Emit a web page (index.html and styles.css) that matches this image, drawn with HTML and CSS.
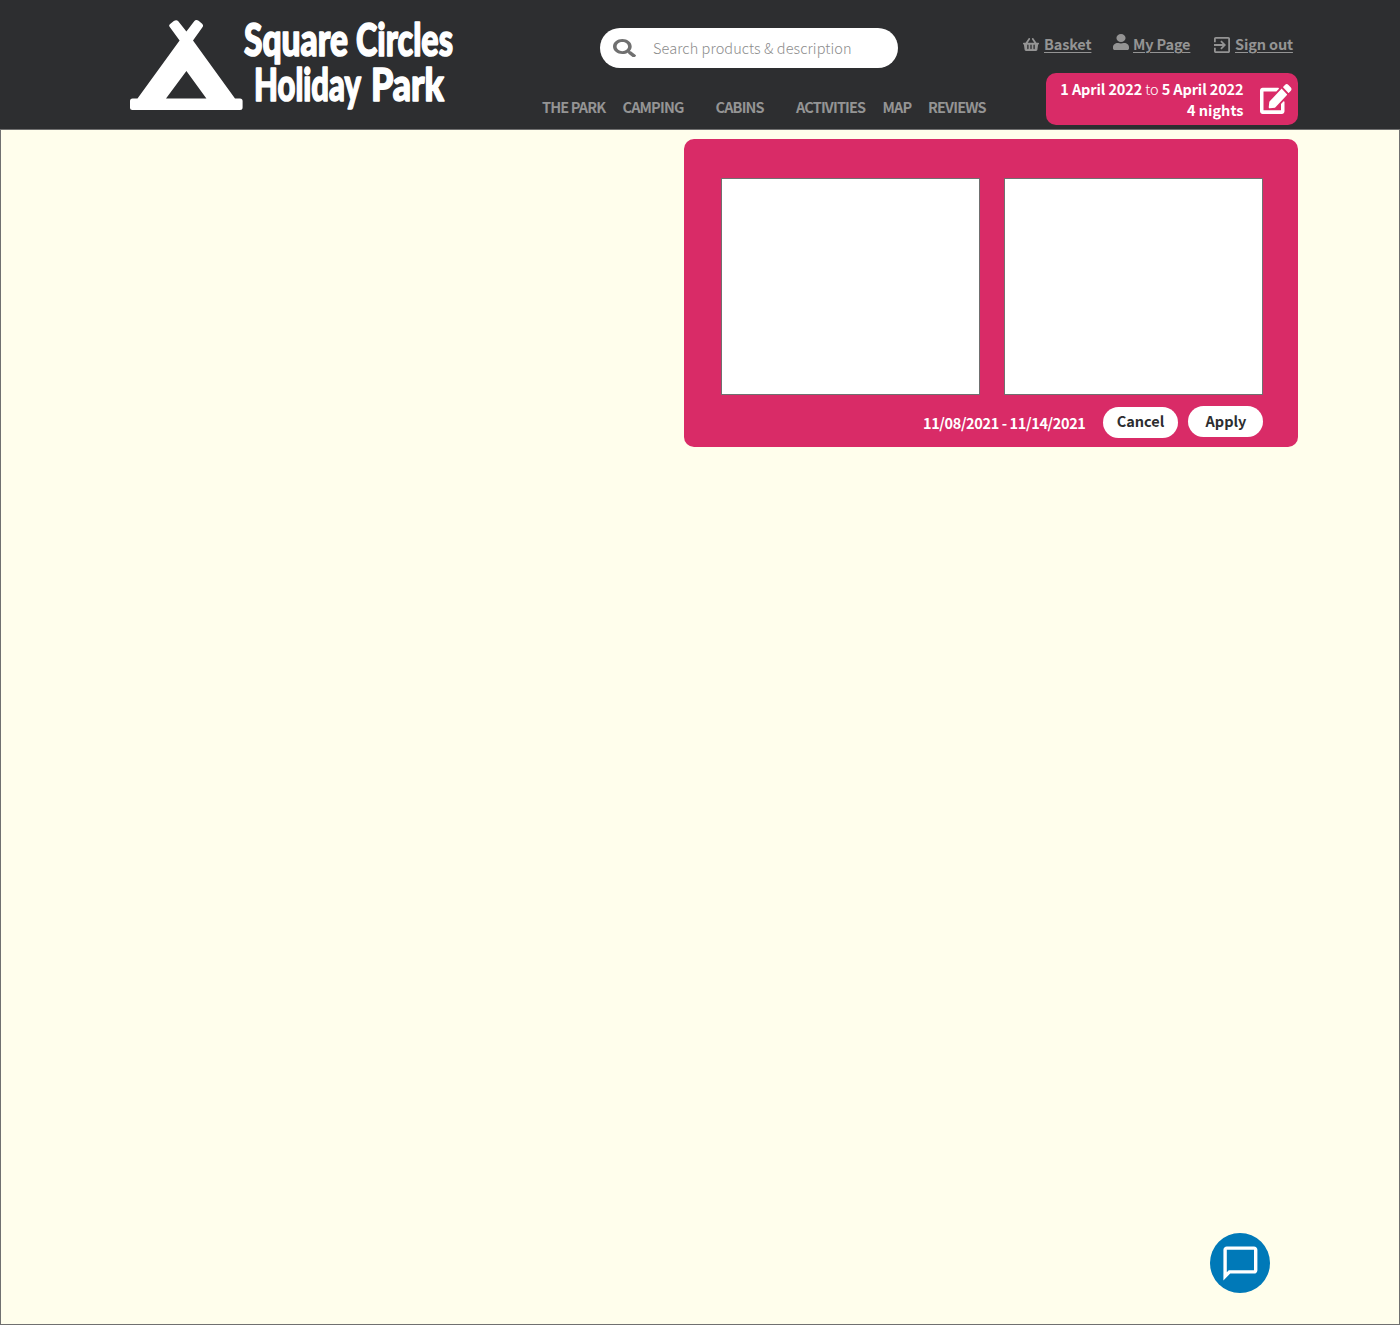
FILE: index.html
```html
<!DOCTYPE html>
<html lang="en">
<head>
<meta charset="utf-8">
<title>Square Circles Holiday Park</title>
<link rel="stylesheet" href="styles.css">
</head>
<body>
<header class="header">
  <svg class="logo" viewBox="130 18 326 94" role="img" aria-label="Square Circles Holiday Park">
    <path class="tent" fill-rule="evenodd" d="M169.4 26.6Q168.6 25.4 169.8 24.2L173.8 21Q176.5 19.2 178.3 21.2L186.4 31.4L194.2 21.2Q196 19.2 198.6 20.8L202.4 24Q203.6 25.4 202.8 26.8L193 40.6L235 98.5H240Q242.6 98.5 242.6 101V107.5Q242.6 110 240 110H132.5Q130 110 130 107.5V101Q130 98.5 132.5 98.5H137.5L179.6 40.6ZM186.4 71L166 98.5H206.4Z"/>
    <g class="logo-text">
      <text x="244" y="56" textLength="104" lengthAdjust="spacingAndGlyphs">Square</text>
      <text x="356" y="56" textLength="97" lengthAdjust="spacingAndGlyphs">Circles</text>
      <text x="254" y="101" textLength="107" lengthAdjust="spacingAndGlyphs">Holiday</text>
      <text x="371" y="101" textLength="73" lengthAdjust="spacingAndGlyphs">Park</text>
    </g>
  </svg>

  <div class="center">
    <label class="search">
      <svg class="search-icon" viewBox="0 0 512 512" preserveAspectRatio="none"><path d="M505 442.7L405.3 343c-4.500-4.500-10.600-7-17-7H372c27.600-35.300 44-79.700 44-128C416 93.100 322.900 0 208 0S0 93.100 0 208s93.100 208 208 208c48.300 0 92.700-16.400 128-44v16.300c0 6.400 2.500 12.500 7 17l99.700 99.700c9.400 9.400 24.600 9.400 33.900 0l28.300-28.300c9.400-9.400 9.400-24.600.1-34zM208 336c-70.700 0-128-57.200-128-128 0-70.700 57.200-128 128-128 70.700 0 128 57.200 128 128 0 70.700-57.200 128-128 128z"/></svg>
      <span class="placeholder">Search products &amp; description</span>
    </label>
    <nav class="nav">
      <a class="wide-64">THE PARK</a>
      <a class="wide-77">CAMPING</a>
      <a class="wide-64">CABINS</a>
      <a class="wide-70">ACTIVITIES</a>
      <a class="wide-29">MAP</a>
      <a>REVIEWS</a>
    </nav>
  </div>

  <div class="account">
    <div class="links">
      <a class="link basket">
        <svg class="basket-icon" viewBox="0 32 576 448" preserveAspectRatio="none"><path fill-rule="evenodd" d="M576 216v16c0 13.255-10.745 24-24 24h-8l-26.113 182.788C514.509 462.435 494.257 480 470.370 480H105.630c-23.887 0-44.139-17.565-47.518-41.212L32 256h-8c-13.255 0-24-10.745-24-24v-16c0-13.255 10.745-24 24-24h67.341l106.780-146.821c10.395-14.292 30.407-17.453 44.701-7.058 14.293 10.395 17.453 30.408 7.058 44.701L170.477 192h235.046L326.120 82.821c-10.395-14.292-7.234-34.306 7.059-44.701 14.291-10.395 34.306-7.235 44.701 7.058L484.659 192H552c13.255 0 24 10.745 24 24zM312 392V280c0-13.255-10.745-24-24-24s-24 10.745-24 24v112c0 13.255 10.745 24 24 24s24-10.745 24-24zM424 392V280c0-13.255-10.745-24-24-24s-24 10.745-24 24v112c0 13.255 10.745 24 24 24s24-10.745 24-24zM200 392V280c0-13.255-10.745-24-24-24s-24 10.745-24 24v112c0 13.255 10.745 24 24 24s24-10.745 24-24z"/></svg>
        <span>Basket</span>
      </a>
      <a class="link page">
        <svg class="user-icon" viewBox="0 0 448 512" preserveAspectRatio="none"><path d="M224 256c70.700 0 128-57.300 128-128S294.700 0 224 0 96 57.300 96 128s57.300 128 128 128zm89.600 32h-16.700c-22.200 10.200-46.900 16-72.900 16s-50.600-5.800-72.900-16h-16.700C60.200 288 0 348.200 0 422.400V464c0 26.500 21.500 48 48 48h352c26.500 0 48-21.500 48-48v-41.600c0-74.200-60.200-134.400-134.400-134.400z"/></svg>
        <span>My Page</span>
      </a>
      <a class="link signout">
        <svg class="exit-icon" viewBox="3 3 18 18"><path d="M10.090 15.590L11.500 17l5-5-5-5-1.410 1.410L12.670 11H3v2h9.670zM19 3H5c-1.110 0-2 .9-2 2v4h2V5h14v14H5v-4H3v4c0 1.100.890 2 2 2h14c1.100 0 2-.9 2-2V5c0-1.100-.9-2-2-2z"/></svg>
        <span>Sign out</span>
      </a>
    </div>
    <div class="stay">
      <div class="stay-text">
        <div class="stay-dates"><b>1 April 2022</b> to <b>5 April 2022</b></div>
        <div class="stay-nights"><b>4 nights</b></div>
      </div>
      <svg class="edit-icon" viewBox="0 0 576 512" preserveAspectRatio="none"><path d="M402.600 83.200l90.200 90.200c3.800 3.800 3.800 10 0 13.800L274.400 405.600l-92.800 10.300c-12.400 1.400-22.900-9.100-21.500-21.500l10.300-92.800L388.800 83.200c3.800-3.800 10-3.800 13.800 0zm162-22.900l-48.800-48.800c-15.200-15.200-39.900-15.200-55.200 0l-35.400 35.400c-3.800 3.800-3.800 10 0 13.800l90.200 90.200c3.800 3.800 10 3.800 13.800 0l35.400-35.400c15.200-15.300 15.200-40 0-55.200zM384 346.200V448H64V128h229.800c3.200 0 6.200-1.300 8.500-3.500l40-40c7.600-7.600 2.200-20.500-8.500-20.500H48C21.500 64 0 85.500 0 112v352c0 26.500 21.500 48 48 48h352c26.500 0 48-21.500 48-48V306.200c0-10.700-12.900-16-20.500-8.500l-40 40c-2.200 2.300-3.500 5.300-3.500 8.500z"/></svg>
    </div>
  </div>
</header>

<main class="main">
  <section class="picker">
    <div class="calendars">
      <div class="calendar"></div>
      <div class="calendar"></div>
    </div>
    <div class="actions">
      <span class="range">11/08/2021 - 11/14/2021</span>
      <button class="button cancel">Cancel</button>
      <button class="button apply">Apply</button>
    </div>
  </section>
</main>

<button class="chat" aria-label="Chat">
  <svg class="chat-icon" viewBox="0 0 24 24"><path d="M4 4h16v12H5.170L4 17.170V4m0-2c-1.100 0-1.990.9-1.990 2L2 22l4-4h14c1.100 0 2-.9 2-2V4c0-1.100-.9-2-2-2H4z"/></svg>
</button>
</body>
</html>
```
FILE: styles.css
```css
* { box-sizing: border-box; }

body {
  margin: 0;
  height: 1325px;
  display: flex;
  flex-direction: column;
  background: #fffeec;
  font-family: "Noto Sans CJK JP", "Noto Sans", sans-serif;
  font-size: 14.5px;
  color: #2d2e30;
}

b { font-weight: 700; }
svg { display: block; flex: none; }

.header {
  height: 129px;
  flex: none;
  display: flex;
  background: #2d2e30;
}

.logo { width: 326px; height: 94px; margin: 18px 0 0 130px; overflow: visible; }
.tent { fill: #fff; }
.logo-text {
  fill: #fff;
  stroke: #fff;
  stroke-width: 1.6px;
  stroke-linejoin: round;
  font-family: Lato, sans-serif;
  font-weight: 900;
  font-size: 45px;
}

.center { width: 460px; margin-left: 86px; padding-top: 28px; }

.search {
  width: 298px;
  height: 40px;
  margin-left: 58px;
  padding-left: 13px;
  display: flex;
  align-items: center;
  gap: 17px;
  border-radius: 20px;
  background: #fff;
}
.search-icon { width: 23px; height: 18.5px; fill: #707070; }
.placeholder {
  color: #8c8c8c;
  font-weight: 300;
  line-height: 20px;
  letter-spacing: 0.1px;
  white-space: nowrap;
}

.nav {
  display: flex;
  gap: 16.5px;
  margin-top: 29px;
  color: #949494;
  font-weight: 700;
  line-height: 20px;
  letter-spacing: -0.85px;
  white-space: nowrap;
}
.wide-64 { width: 64px; }
.wide-77 { width: 76.5px; }
.wide-70 { width: 70px; }
.wide-29 { width: 29px; }

.account { width: 298px; padding-top: 34px; }

.links {
  height: 20px;
  display: flex;
  padding-left: 21px;
  color: #949494;
  font-weight: 700;
  line-height: 20px;
  letter-spacing: -0.15px;
  white-space: nowrap;
}
.link { display: flex; align-items: center; }
.link svg { fill: #949494; }
.link span {
  text-decoration: underline;
  text-decoration-thickness: 1px;
  text-underline-offset: 2px;
}
.basket { width: 90px; gap: 5px; }
.page { width: 101px; gap: 4px; }
.signout { gap: 5px; }
.basket-icon { width: 16px; height: 13px; }
.user-icon { width: 16px; height: 16px; margin-bottom: 4px; }
.exit-icon { width: 16px; height: 16px; margin-top: 2px; }

.stay {
  width: 252px;
  height: 52px;
  margin: 19px 0 0 44px;
  padding: 5px 6.5px 5px 14px;
  display: flex;
  justify-content: space-between;
  border-radius: 10px;
  background: #d92b67;
  color: #fff;
}
.stay-text {
  width: 183.5px;
  text-align: right;
  line-height: 21px;
  font-weight: 300;
  white-space: nowrap;
}
.stay-dates { letter-spacing: -0.12px; }
.edit-icon { width: 31.5px; height: 30px; margin-top: 6px; fill: #fff; }

.main {
  flex: 1;
  padding: 9px 101px 0 683px;
  border: 1px solid #707070;
}

.picker {
  width: 614px;
  height: 308px;
  padding: 39px 35px 0 37px;
  border-radius: 10px;
  background: #d92b67;
}
.calendars { display: flex; gap: 24px; }
.calendar { width: 259px; height: 217px; border: 1px solid #707070; background: #fff; }

.actions { display: flex; justify-content: flex-end; padding-top: 11px; }
.range {
  margin-right: 17.5px;
  padding-top: 7px;
  color: #fff;
  font-weight: 700;
  line-height: 20px;
  letter-spacing: -0.38px;
  white-space: nowrap;
}
.button {
  width: 75px;
  height: 31px;
  padding: 0 0 3px;
  border: 0;
  border-radius: 15.5px;
  background: #fff;
  color: #2d2e30;
  font: inherit;
  font-weight: 700;
  line-height: 28px;
}
.apply { padding-bottom: 1.5px; padding-left: 1px; }
.cancel { margin: 1px 10px 0 0; }

.chat {
  position: absolute;
  left: 1210px;
  top: 1233px;
  width: 60px;
  height: 60px;
  padding: 0;
  display: flex;
  align-items: center;
  justify-content: center;
  border: 0;
  border-radius: 50%;
  background: #0079b8;
}
.chat-icon { width: 40.8px; height: 40.8px; fill: #fff; }
```
